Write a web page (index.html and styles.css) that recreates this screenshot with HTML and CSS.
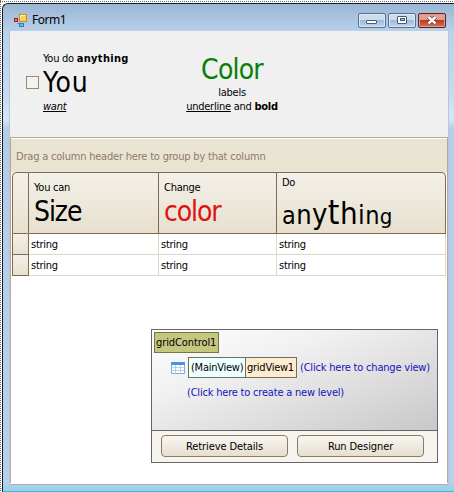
FILE: index.html
```html
<!DOCTYPE html>
<html lang="en">
<head>
<meta charset="utf-8">
<title>Form1</title>
<link rel="stylesheet" href="styles.css">
</head>
<body>
<div class="window">
  <header class="titlebar">
    <svg class="app-icon" width="14" height="14" viewBox="0 0 14 14">
      <rect x="5.500" y=".5" width="7" height="7" fill="#f8d35a" stroke="#c89018"/>
      <path d="M6.500 4V1.500H11" fill="none" stroke="#fff2b0"/>
      <rect x=".5" y="4.500" width="3" height="3" fill="#e88070" stroke="#b01818"/>
      <path d="M3.500 9.500H5" stroke="#777"/>
      <rect x="5.500" y="9.500" width="4" height="3" fill="#6db4ee" stroke="#3978c0"/>
    </svg>
    <span class="caption">Form1</span>
    <div class="controls">
      <div class="control"><svg width="26" height="13" viewBox="0 0 26 13"><rect x="7.500" y="6.500" width="10" height="3" rx=".5" fill="#fff" stroke="#4b5a70"/></svg></div>
      <div class="control"><svg width="26" height="13" viewBox="0 0 26 13"><rect x="8.500" y="2.500" width="9" height="7" rx=".5" fill="#fff" stroke="#4b5a70"/><rect x="11.500" y="4.500" width="4" height="2" fill="#a9c4e0" stroke="#4b5a70"/></svg></div>
      <div class="control close"><svg width="26" height="13" viewBox="0 0 26 13"><path d="M9.500 3L16.500 9.500M16.500 3L9.500 9.500" stroke="#6a3030" stroke-width="4"/><path d="M9.500 3L16.500 9.500M16.500 3L9.500 9.500" stroke="#fff" stroke-width="2.400"/></svg></div>
    </div>
  </header>
  <main class="client">
    <section class="top-panel">
      <div class="check">
        <span class="box"></span>
        <div class="check-text">
          <div class="line"><span>You do </span><b class="any">anything</b></div>
          <div class="line big">You</div>
          <div class="line"><i><u>want</u></i></div>
        </div>
      </div>
      <div class="label">
        <div class="line green">Color</div>
        <div class="line">labels</div>
        <div class="line"><u>underline</u> and <b>bold</b></div>
      </div>
    </section>
    <section class="grid">
      <div class="group-panel">Drag a column header here to group by that column</div>
      <div class="table">
        <div class="row head">
          <div class="cell ind"></div>
          <div class="cell"><div class="sub">You can</div><div class="title">Size</div></div>
          <div class="cell"><div class="sub">Change</div><div class="title red">color</div></div>
          <div class="cell last"><div class="sub">Do</div><div class="title mixed"><span class="s1">a</span><span class="s2">n</span><span class="s3">y</span><span class="s4">t</span><span class="s5">h</span><span class="s6">i</span><span class="s7">n</span><span class="s8">g</span></div></div>
        </div>
        <div class="row"><div class="cell ind"></div><div class="cell">string</div><div class="cell">string</div><div class="cell">string</div></div>
        <div class="row"><div class="cell ind"></div><div class="cell">string</div><div class="cell">string</div><div class="cell">string</div></div>
      </div>
      <div class="designer">
        <div class="levels">
          <span class="control-name">gridControl1</span>
          <div class="level">
            <svg width="14" height="12" viewBox="0 0 14 12"><path d="M.5 .5H13.500V11.500H.5Z" fill="#fff" stroke="#78a8d8"/><path d="M0 0H14V3H0Z" fill="#4c94d8"/><path d="M0 5.500H14M0 8.500H14M4.500 3V12M9.500 3V12" stroke="#a5c8ea" stroke-width=".8"/></svg>
            <div class="view"><span class="main-view">(MainView)</span><span class="view-name">gridView1</span></div>
            <a class="link change">(Click here to change view)</a>
          </div>
          <a class="link create">(Click here to create a new level)</a>
        </div>
        <div class="actions"><div class="button">Retrieve Details</div><div class="button">Run Designer</div></div>
      </div>
    </section>
  </main>
</div>
</body>
</html>
```
FILE: styles.css
```css
* { box-sizing: border-box; }
html, body { margin: 0; width: 454px; height: 492px; overflow: hidden; }
body {
  padding: 3px 0 0 2px;
  font: 11px/14px "DejaVu Sans Condensed", "DejaVu Sans", sans-serif;
  letter-spacing: -0.25px;
  color: #000;
  background:
    repeating-linear-gradient(90deg, #666 0 1px, #fff 1px 2px) 0 1px / 100% 1px no-repeat,
    repeating-linear-gradient(#666 0 1px, #fff 1px 2px) 0 0 / 1px 100% no-repeat,
    #fff;
}
.window {
  width: 455px; height: 489px;
  border: 1px solid #101820; border-right: 0; border-bottom: 1px solid #48b5cf;
  border-radius: 6px 0 0 0;
  background: linear-gradient(#9ab6d5 0, #b9d1ea 28px, #c6dbf2 90px, #d6e6f7 115px, #b4cde8 125px, #b8d0ea 480px, #9bd3ee 483px);
  padding-left: 6px;
}
.titlebar { height: 27px; display: flex; align-items: flex-start; padding-left: 5px; }
.app-icon { margin-top: 10px; }
.caption { font: 12px/16px "Noto Sans", sans-serif; letter-spacing: -0.5px; margin: 8px 0 0 4px; }
.controls { display: flex; gap: 2px; margin: 9px 0 0 auto; padding-right: 11px; }
.control {
  width: 28px; height: 15px; border: 1px solid #586f90; border-radius: 2px;
  background: linear-gradient(#cbdcef 0 45%, #9fbad8 50%, #bfd6ee);
  box-shadow: inset 0 0 0 1px #dce9f6;
}
.control svg { display: block; }
.close { border-color: #5b202a; background: linear-gradient(#e6a08f 0 42%, #bd3826 48%, #d77350); box-shadow: inset 0 0 0 1px #e59d89; }
.client { width: 440px; height: 454px; background: #fff; border-left: 1px solid #b8c4da; border-right: 1px solid #b8c4da; border-bottom: 1px solid #b2a6bb; }
.top-panel { height: 106px; background: #f0f0f0; display: flex; }
.check { display: flex; width: 175px; padding: 21px 0 0 16px; }
.box { width: 13px; height: 13px; border: 1px solid #9a8972; background: #f4f2ee; margin-top: 24px; }
.check-text { padding-left: 4px; }
.line { white-space: nowrap; }
.any { letter-spacing: 0.3px; }
.big { font-size: 28px; line-height: 34px; letter-spacing: 0.8px; }
.label { text-align: center; width: 94px; margin-top: 23px; }
.green { color: #078007; font-size: 28px; line-height: 32px; letter-spacing: -0.8px; }
.grid { height: 346px; border: 1px solid #b5a996; border-bottom: 0; padding: 1px 1px 0; }
.group-panel { margin: 0 -1px; height: 33px; padding: 11px 0 0 5px; color: #8d7b69; background: #e9e3d2; letter-spacing: -0.2px; white-space: nowrap; }
.table { width: 434px; background: linear-gradient(#e9e3d2 10px, #fff 10px); }
.row { display: grid; grid-template: 100% / 17px 130px 118px 169px; height: 21px; }
.cell { border-right: 1px solid #ddd8ca; border-bottom: 1px solid #ddd8ca; padding: 4px 0 0 2px; white-space: nowrap; background: #fff; }
.cell.ind { border: 1px solid #806954; border-top: 0; background: linear-gradient(#f3f0e8, #e7e0ce); }
.head { height: 62px; }
.head .cell, .head .cell.ind { border: 1px solid #806954; border-left: 0; background: linear-gradient(#f3f0e9, #e7e0ce); padding: 8px 0 0 5px; }
.head .cell.ind { border-left: 1px solid #806954; border-radius: 5px 0 0 0; }
.head .cell.last { border-radius: 0 5px 0 0; padding: 3px 0 0 5px; }
.title { font-size: 28px; line-height: 34px; letter-spacing: -1.1px; }
.red { color: #df1010; }
.mixed { line-height: 46px; letter-spacing: 0.4px; }
.s1 { font-size: 25px; } .s2 { font-size: 27px; } .s3 { font-size: 29px; } .s4 { font-size: 33px; } .s5 { font-size: 31px; } .s6 { font-size: 27px; } .s7 { font-size: 25px; } .s8 { font-size: 22px; }
.designer { width: 287px; height: 134px; border: 1px solid #666; margin: 53px 0 0 139px; }
.levels { height: 101px; border-bottom: 1px solid #666; padding: 2px; background: linear-gradient(160deg, #fff, #f0f0f0 35%, #c8c8c8); }
.control-name { display: block; width: 65px; height: 21px; border: 1px solid #74764c; background: #c5c77e; padding: 3px 0 0 1px; letter-spacing: -0.1px; }
.level { display: flex; align-items: center; margin: 4px 0 0 17px; }
.view { display: flex; height: 21px; width: 109px; border: 1px solid #707060; margin-left: 3px; }
.main-view { width: 57px; background: #edffff; border-right: 1px solid #707060; padding: 3px 0 0 2px; }
.view-name { flex: 1; background: #ffebcf; padding: 3px 0 0 1px; }
.link { color: #1712bd; white-space: nowrap; }
.change { margin-left: 3px; letter-spacing: -0.2px; }
.create { display: block; margin: 8px 0 0 33px; letter-spacing: -0.2px; }
.actions { height: 31px; background: #f7f4ef; display: flex; gap: 9px; padding: 4px 0 0 9px; }
.button { width: 127px; height: 22px; border: 1px solid #897b69; border-radius: 4px; background: linear-gradient(#f8f6f1, #e6dfcf); text-align: center; line-height: 21px; letter-spacing: -0.1px; }
```
